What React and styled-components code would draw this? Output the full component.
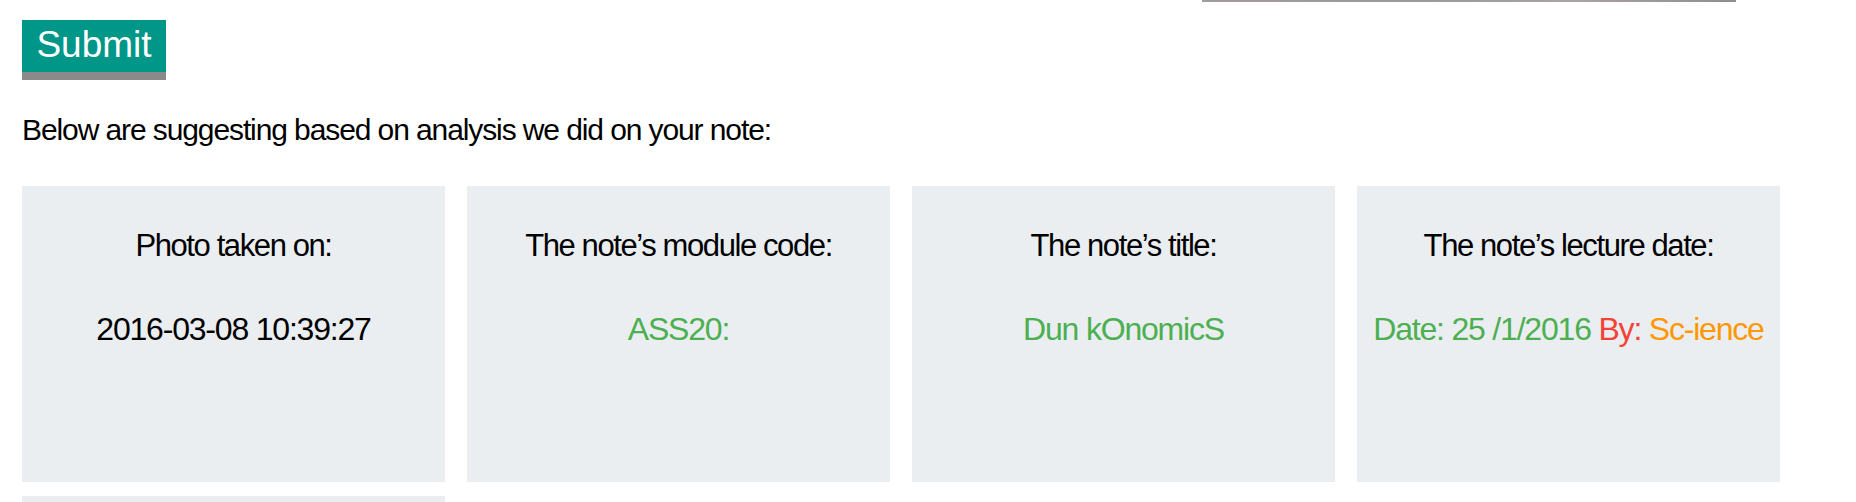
import React from "react";
import styled, { createGlobalStyle } from "styled-components";

const GlobalStyle = createGlobalStyle`
  html, body { margin: 0; padding: 0; background: #ffffff; }
  body { font-family: "Liberation Sans", Arial, sans-serif; color: #000; }
`;

const Page = styled.div`
  padding: 0 0 0 22px;
  display: flex;
  flex-direction: column;
  align-items: flex-start;
`;

const ImageEdge = styled.div`
  width: 534px;
  height: 2px;
  margin-left: 1180px;
  background: linear-gradient(90deg, #a19c9c, #9a9a98 40%, #a8a3a3 70%, #8f8d8d);
`;

const SubmitButton = styled.button`
  margin-top: 18px;
  width: 144px;
  height: 60px;
  padding: 0 0 2px;
  border: none;
  border-bottom: 8px solid #8a8a8a;
  background: #009688;
  color: #ffffff;
  font-family: "Liberation Sans", Arial, sans-serif;
  font-size: 37px;
  line-height: 44px;
  cursor: pointer;
`;

const Intro = styled.p`
  margin: 30px 0 0;
  font-size: 30px;
  line-height: 40px;
  letter-spacing: -1.1px;
`;

const Grid = styled.div`
  margin-top: 36px;
  display: grid;
  grid-template-columns: repeat(4, 423px);
  column-gap: 22px;
  row-gap: 14px;
`;

const Card = styled.div`
  height: 296px;
  background: #eaeef1;
  text-align: center;
  padding-top: 40px;
  box-sizing: border-box;
`;

const CardTitle = styled.div`
  font-size: 31px;
  line-height: 40px;
  letter-spacing: -1.4px;
`;

const CardValue = styled.div`
  margin-top: 43px;
  font-size: 32px;
  line-height: 40px;
  letter-spacing: -1.2px;
  white-space: nowrap;
`;

const Tone = styled.span`
  color: ${(p) =>
    p.$tone === "green" ? "#4caf50" : p.$tone === "red" ? "#f44336" : p.$tone === "orange" ? "#ff9800" : "#000"};
`;

const cards = [
  { title: "Photo taken on:", parts: [{ t: "2016-03-08 10:39:27", tone: "black" }] },
  { title: "The note\u2019s module code:", parts: [{ t: "ASS20:", tone: "green" }] },
  { title: "The note\u2019s title:", parts: [{ t: "Dun kOnomicS", tone: "green" }] },
  {
    title: "The note\u2019s lecture date:",
    parts: [
      { t: "Date: 25 /1/2016 ", tone: "green" },
      { t: "By: ", tone: "red" },
      { t: "Sc-ience", tone: "orange" },
    ],
  },
];

export default function App() {
  return (
    <>
      <GlobalStyle />
      <Page>
        <ImageEdge />
        <SubmitButton type="button">Submit</SubmitButton>
        <Intro>Below are suggesting based on analysis we did on your note:</Intro>
        <Grid>
          {cards.map((c, i) => (
            <Card key={i}>
              <CardTitle>{c.title}</CardTitle>
              <CardValue>
                {c.parts.map((p, j) => (
                  <Tone key={j} $tone={p.tone}>
                    {p.t}
                  </Tone>
                ))}
              </CardValue>
            </Card>
          ))}
          <Card />
        </Grid>
      </Page>
    </>
  );
}
